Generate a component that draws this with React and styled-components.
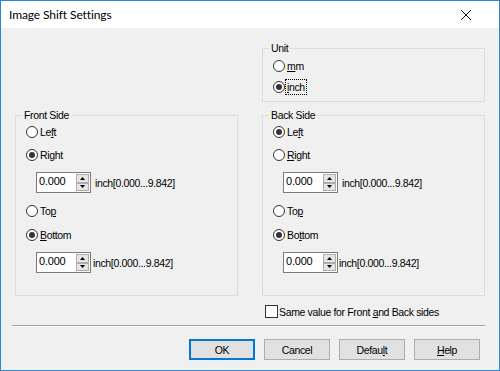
import React from 'react';
import styled, { createGlobalStyle } from 'styled-components';

const Global = createGlobalStyle`
  html, body { margin: 0; padding: 0; background: #fff; }
  * { box-sizing: border-box; }
`;

const Window = styled.div`
  width: 500px;
  height: 371px;
  border: 1px solid #2b88d8;
  background: #f0f0f0;
  display: flex;
  flex-direction: column;
  font-family: "Liberation Sans", Arial, sans-serif;
  font-size: 10.5px;
  letter-spacing: -0.35px;
  color: #000;
`;

const TitleBar = styled.div`
  height: 27px;
  flex: none;
  background: #fff;
  display: flex;
  align-items: center;
  justify-content: space-between;
  padding: 0 28px 0 8px;
`;

const Title = styled.span`
  font-family: Lato, "Noto Sans", sans-serif;
  font-size: 12px;
  letter-spacing: -0.1px;
  color: #000;
`;

const Body = styled.div`
  flex: 1;
  display: flex;
  flex-direction: column;
  padding: 20px 14px 0 14px;
`;

const Grid = styled.div`
  display: grid;
  grid-template-columns: 223px 223px;
  column-gap: 24px;
`;

const Group = styled.div`
  position: relative;
  grid-column: ${p => p.$col};
  margin-top: ${p => p.$mt || 0}px;
  border: 1px solid #dcdcdc;
  padding: ${p => p.$pad};
  display: flex;
  flex-direction: column;
`;

const Legend = styled.span`
  position: absolute;
  top: -7px;
  left: 6px;
  padding: 0 2px;
  line-height: 12px;
  background: #f0f0f0;
`;

const RadioRow = styled.label`
  display: flex;
  align-items: center;
  height: 16px;
  gap: 1px;
  margin-top: ${p => p.$mt || 0}px;
`;

const RadioCircle = styled.span`
  flex: none;
  width: 12px;
  height: 12px;
  border-radius: 50%;
  border: 1px solid #333;
  background: #fff;
  display: flex;
  align-items: center;
  justify-content: center;
  &::after {
    content: '';
    width: 6px;
    height: 6px;
    border-radius: 50%;
    background: ${p => (p.$checked ? '#333' : 'transparent')};
  }
`;

const Label = styled.span`
  line-height: 14px;
  padding: 0 1px;
  outline: ${p => (p.$focus ? '1px dotted #000' : 'none')};
  outline-offset: 0;
`;

const U = styled.span`
  text-decoration: underline;
  text-underline-offset: 1px;
`;

const SpinRow = styled.div`
  display: flex;
  align-items: center;
  gap: ${p => p.$gap}px;
  margin: ${p => p.$mt}px 0 0 ${p => p.$ml}px;
`;

const Spin = styled.div`
  display: flex;
  width: 55px;
  height: 21px;
  border: 1px solid #7a7a7a;
  background: #fff;
`;

const SpinText = styled.span`
  flex: 1;
  padding: 2px 0 0 2px;
  font-size: 11px;
  letter-spacing: -0.2px;
  line-height: 13px;
`;

const SpinButtons = styled.div`
  width: 14px;
  display: flex;
  flex-direction: column;
  padding: 1px 1px 1px 0;
`;

const SpinButton = styled.div`
  flex: 1;
  border: 1px solid #adadad;
  background: #e5e5e5;
  display: flex;
  align-items: center;
  justify-content: center;
`;

const CheckRow = styled.label`
  grid-column: 2;
  display: flex;
  align-items: center;
  gap: 0;
  height: 13px;
  margin: 9px 0 0 3px;
`;

const CheckBox = styled.span`
  flex: none;
  width: 13px;
  height: 13px;
  border: 1px solid #333;
  background: #fff;
`;

const Separator = styled.div`
  margin: 7px 0 0 -3px;
  border-top: 1px solid #a0a0a0;
  border-bottom: 1px solid #fff;
`;

const ButtonRow = styled.div`
  display: flex;
  justify-content: flex-end;
  gap: 9px;
  margin-top: 12px;
  padding-right: 5px;
`;

const Button = styled.button`
  width: 66px;
  height: 21px;
  padding: 0;
  font: inherit;
  letter-spacing: -0.35px;
  color: #000;
  background: #e1e1e1;
  border: 1px solid ${p => (p.$default ? '#0078d7' : '#adadad')};
  box-shadow: ${p => (p.$default ? 'inset 0 0 0 1px #0078d7' : 'none')};
`;

const Arrow = ({ up }) => (
  <svg width="5" height="3" viewBox="0 0 5 3">
    <path d={up ? 'M0 3 L2.5 0 L5 3 Z' : 'M0 0 L2.5 3 L5 0 Z'} fill="#000" />
  </svg>
);

const SpinBox = ({ mt, ml, gap }) => (
  <SpinRow $mt={mt} $ml={ml} $gap={gap}>
    <Spin>
      <SpinText>0.000</SpinText>
      <SpinButtons>
        <SpinButton><Arrow up /></SpinButton>
        <SpinButton><Arrow /></SpinButton>
      </SpinButtons>
    </Spin>
    <span>inch[0.000...9.842]</span>
  </SpinRow>
);

const Radio = ({ checked, mt, children, focus }) => (
  <RadioRow $mt={mt}>
    <RadioCircle $checked={checked} />
    <Label $focus={focus}>{children}</Label>
  </RadioRow>
);

export default function App() {
  return (
    <>
      <Global />
      <Window>
        <TitleBar>
          <Title>Image Shift Settings</Title>
          <svg width="10" height="10" viewBox="0 0 10 10">
            <path d="M0 0 L10 10 M10 0 L0 10" stroke="#111" strokeWidth="1" />
          </svg>
        </TitleBar>
        <Body>
          <Grid>
            <Group $col="2" $pad="9px 10px 6px 10px">
              <Legend>Unit</Legend>
              <Radio><U>m</U>m</Radio>
              <Radio checked mt={5} focus><U>i</U>nch</Radio>
            </Group>
            <Group $col="1" $mt={13} $pad="8px 10px 22px 10px">
              <Legend>Front Side</Legend>
              <Radio>Le<U>f</U>t</Radio>
              <Radio checked mt={7}>Ri<U>g</U>ht</Radio>
              <SpinBox mt={9} ml={10} gap={4} />
              <Radio mt={10}>To<U>p</U></Radio>
              <Radio checked mt={8}><U>B</U>ottom</Radio>
              <SpinBox mt={9} ml={10} gap={2} />
            </Group>
            <Group $col="2" $mt={13} $pad="8px 10px 22px 10px">
              <Legend>Back Side</Legend>
              <Radio checked>Le<U>f</U>t</Radio>
              <Radio mt={7}><U>R</U>ight</Radio>
              <SpinBox mt={9} ml={10} gap={4} />
              <Radio mt={10}>To<U>p</U></Radio>
              <Radio checked mt={8}>Bo<U>t</U>tom</Radio>
              <SpinBox mt={9} ml={10} gap={1} />
            </Group>
            <CheckRow>
              <CheckBox />
              <Label>Same value for Front <U>a</U>nd Back sides</Label>
            </CheckRow>
          </Grid>
          <Separator />
          <ButtonRow>
            <Button $default>OK</Button>
            <Button>Cancel</Button>
            <Button>Defau<U>l</U>t</Button>
            <Button><U>H</U>elp</Button>
          </ButtonRow>
        </Body>
      </Window>
    </>
  );
}
